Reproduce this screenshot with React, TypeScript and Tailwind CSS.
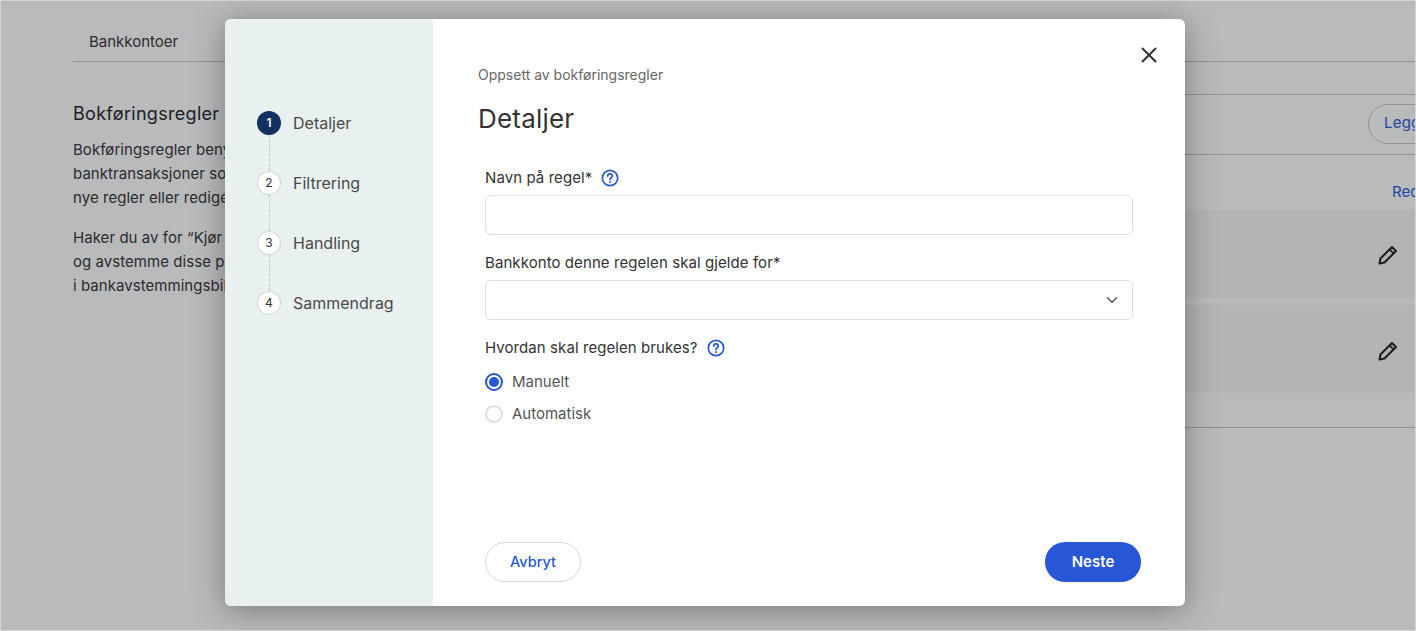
import { ChevronDown, X } from 'lucide-react';

const steps = ['Detaljer', 'Filtrering', 'Handling', 'Sammendrag'];

const HelpIcon = () => (
  <svg width="18" height="18" viewBox="0 0 18 18" fill="none" className="shrink-0">
    <circle cx="9" cy="9" r="7.7" stroke="#2756d6" strokeWidth="1.7" />
    <path d="M6.7 7.1c0-1.3 1.1-2.2 2.3-2.2s2.3.9 2.3 2.1c0 1.8-2.3 1.7-2.3 3.4" stroke="#2756d6" strokeWidth="1.7" strokeLinecap="round" />
    <circle cx="9" cy="13" r="1" fill="#2756d6" />
  </svg>
);

const PencilIcon = () => (
  <svg width="20" height="20" viewBox="0 0 18 18" fill="none" className="text-[#222]">
    <path d="M1.4 16.6l.8-4.4L12.6 1.8 16.2 5.4 5.8 15.8z" stroke="currentColor" strokeWidth="1.9" strokeLinejoin="round" />
    <path d="M10.4 4l3.6 3.6" stroke="currentColor" strokeWidth="1.6" />
  </svg>
);

const Background = () => (
  <div className="flex h-full w-full flex-col overflow-hidden bg-white pl-[73px] text-[#333]">
    <div className="h-[62px] shrink-0 border-b border-[#c4c5c5] pl-4 pt-[32px] text-[15px] leading-[20px]">Bankkontoer</div>
    <div className="flex flex-1">
      <div className="w-[520px] shrink-0 pt-[39px]">
        <h2 className="text-lg leading-[26px] font-normal tracking-[0.3px] text-[#222]">Bokføringsregler</h2>
        <div className="mt-[11px] whitespace-nowrap text-[15px] leading-6 tracking-[0.05px]">
          <p>Bokføringsregler benyttes for å bokføre</p>
          <p>banktransaksjoner som gjentar seg. Du kan lage</p>
          <p>nye regler eller redigere eksisterende.</p>
          <p className="mt-4">Haker du av for “Kjør automatisk” vil vi bokføre</p>
          <p>og avstemme disse på bakgrunn av regelen du har</p>
          <p>i bankavstemmingsbildet.</p>
        </div>
      </div>
      <div className="flex-1">
        <div className="mt-[32px] flex h-[61px] items-center justify-end border-y border-[#c4c5c5] pb-[2px]">
          <button className="-mr-[60px] h-10 w-[108px] rounded-full border border-[#c4c5c5] pl-[15px] text-left text-[15px] tracking-[0.2px] text-[#2756d6]">Legg til</button>
        </div>
        <div className="flex h-[55px] justify-end pt-[27px] text-[15px] leading-5 text-[#2756d6]">
          <span className="-mr-[10px] w-[34px] overflow-hidden whitespace-nowrap">Rediger</span>
        </div>
        <div className="flex h-[88px] items-center justify-end bg-[#f7f7f7] pr-[18px] pt-[2px]">
          <PencilIcon />
        </div>
        <div className="mt-[7px] flex h-[88px] items-center justify-end bg-[#f7f7f7] pr-[18px] pt-[4px]">
          <PencilIcon />
        </div>
        <div className="h-[35px] border-b border-[#c4c5c5]" />
      </div>
    </div>
  </div>
);

const Sidebar = () => (
  <div className="w-[208px] shrink-0 bg-[#e8f1ef] pl-[32px] pt-[92px]">
    {steps.map((step, i) => (
      <div key={step} className="relative flex h-[60px] items-start gap-[12px]">
        <div className={`z-10 flex h-6 w-6 items-center justify-center rounded-full text-xs ${i === 0 ? 'bg-[#12315f] font-semibold text-white' : 'border border-[#ccd0d0] bg-white text-[#333]'}`}>
          {i + 1}
        </div>
        <span className="text-base leading-6 text-[#4a4a4a]">{step}</span>
        {i < steps.length - 1 && <div className="absolute left-[11.5px] top-6 h-9 border-l border-dashed border-[#c4c8c8]" />}
      </div>
    ))}
  </div>
);

const Field = ({ children }: { children?: React.ReactNode }) => (
  <div className="flex h-10 w-[648px] items-center justify-end rounded-md border border-[#dcdfe0] bg-white pr-[11px]">{children}</div>
);

const Radio = ({ label, checked }: { label: string; checked?: boolean }) => (
  <div className="flex h-6 items-center gap-[9px]">
    {checked ? (
      <span className="flex h-[18px] w-[18px] items-center justify-center rounded-full border-2 border-[#2756d6]">
        <span className="h-[10px] w-[10px] rounded-full bg-[#2756d6]" />
      </span>
    ) : (
      <span className="h-[18px] w-[18px] rounded-full border-2 border-[#dcdfe0]" />
    )}
    <span className="text-[15px] text-[#555]">{label}</span>
  </div>
);

export default function App() {
  return (
    <div className="relative h-[631px] w-full overflow-hidden font-['Inter',sans-serif]">
      <Background />
      <div className="absolute inset-0 border border-[#d4d5d5] bg-[#181c20]/30" />
      <div className="absolute left-[225px] top-[19px] flex h-[587px] w-[960px] overflow-hidden rounded-md bg-white shadow-[0_4px_32px_rgba(0,0,0,0.35)]">
        <Sidebar />
        <div className="relative flex-1 pl-[45px] pr-[44px]">
          <button className="absolute right-[23px] top-[23px] text-[#333]">
            <X size={26} strokeWidth={1.85} />
          </button>
          <p className="mt-[47px] text-sm leading-[18px] text-[#666]">Oppsett av bokføringsregler</p>
          <h1 className="mt-[17px] text-[26px] leading-[36px] font-normal tracking-[0.2px] text-[#333]">Detaljer</h1>
          <div className="ml-[7px] mt-[29px]">
            <label className="flex h-6 items-center gap-[9px] text-[15px] tracking-[0.08px] text-[#333]">
              Navn på regel* <HelpIcon />
            </label>
            <div className="mt-[5px]"><Field /></div>
            <label className="mt-[16px] flex h-6 items-center text-[15px] tracking-[0.08px] text-[#333]">Bankkonto denne regelen skal gjelde for*</label>
            <div className="mt-[5px]"><Field><ChevronDown size={18} strokeWidth={2} className="text-[#555]" /></Field></div>
            <label className="mt-[16px] flex h-6 items-center gap-[9px] text-[15px] tracking-[0.08px] text-[#333]">
              Hvordan skal regelen brukes? <HelpIcon />
            </label>
            <div className="mt-[10px] flex flex-col gap-2">
              <Radio label="Manuelt" checked />
              <Radio label="Automatisk" />
            </div>
          </div>
          <div className="absolute bottom-6 left-[52px] right-[44px] flex justify-between">
            <button className="h-10 w-24 rounded-full border border-[#d5d7d8] bg-white text-[14.5px] font-medium text-[#2756d6]">Avbryt</button>
            <button className="h-10 w-24 rounded-full bg-[#2756d6] text-[15px] font-semibold text-white">Neste</button>
          </div>
        </div>
      </div>
    </div>
  );
}
